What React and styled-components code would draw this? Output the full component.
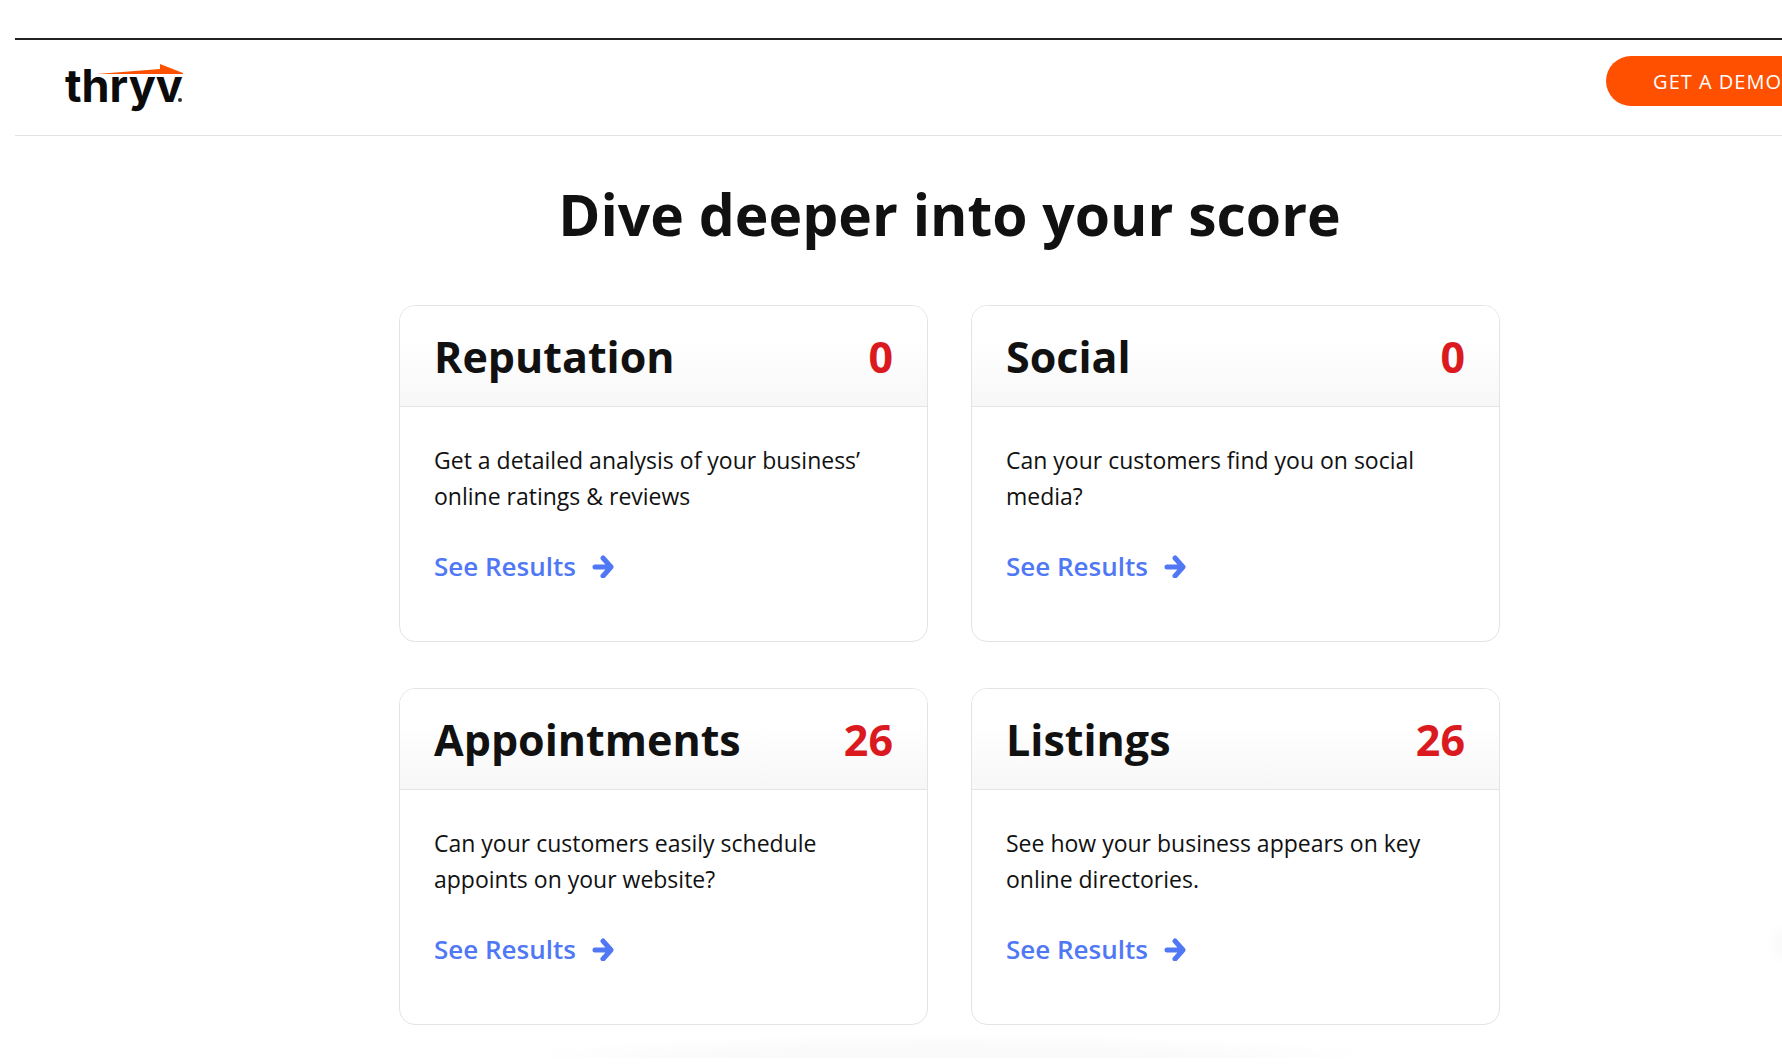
import React from "react";
import styled, { createGlobalStyle } from "styled-components";

const GlobalStyle = createGlobalStyle`
  * {
    box-sizing: border-box;
  }
  body {
    margin: 0;
    background: #fff;
    color: #111;
    font-family: "Open Sans", "Noto Sans", sans-serif;
    overflow: hidden;
  }
`;

/* the page is wider than its window, its right edge is cut off */
const Page = styled.div`
  padding: 38px 0 0 15px;
  margin-right: -102px;
`;

const Header = styled.header`
  display: flex;
  align-items: center;
  justify-content: space-between;
  height: 98px;
  padding: 0 48px;
  border-top: 2px solid #222;
  border-bottom: 1px solid #e2e2e2;
`;

const LogoLink = styled.a`
  display: block;
  height: 60px;
`;

const DemoButton = styled.button`
  height: 50px;
  margin-bottom: 13px;
  padding: 0 54px 0 47px;
  border: none;
  border-radius: 25px;
  background: #ff5000;
  color: #fff;
  font-family: inherit;
  font-size: 20px;
  letter-spacing: 1px;
  cursor: pointer;
`;

const Main = styled.main`
  max-width: 1101px;
  margin: 0 auto;
`;

const Title = styled.h1`
  margin: 38px 0 51px;
  font-size: 57px;
  line-height: 80px;
  font-weight: 700;
  text-align: center;
`;

const CardGrid = styled.div`
  display: grid;
  grid-template-columns: 1fr 1fr;
  gap: 46px 43px;
`;

const Card = styled.section`
  min-height: 337px;
  border: 1px solid #e4e4e4;
  border-radius: 16px;
  overflow: hidden;
`;

const CardHeader = styled.div`
  display: flex;
  align-items: center;
  justify-content: space-between;
  height: 101px;
  padding: 2px 34px 0;
  border-bottom: 1px solid #e4e4e4;
  background: linear-gradient(#fff 35%, #f7f7f7);
`;

const CardTitle = styled.h2`
  margin: 0;
  font-size: 43px;
  line-height: 60px;
  font-weight: 700;
`;

const Score = styled.span`
  color: #da1a1e;
  font-size: 43px;
  line-height: 60px;
  font-weight: 700;
`;

const CardBody = styled.div`
  padding: 35px 34px;
`;

const Description = styled.p`
  max-width: 440px;
  margin: 0 0 34px;
  font-size: 23px;
  line-height: 36px;
`;

const ResultsLink = styled.a`
  display: inline-flex;
  align-items: center;
  gap: 16px;
  color: #5078f5;
  font-size: 26px;
  line-height: 36px;
  font-weight: 600;
  text-decoration: none;
`;

const NextSectionShadow = styled.div`
  height: 24px;
  margin: 9px 110px 0;
  background: radial-gradient(
    ellipse 50% 100% at 50% 100%,
    #fafafa 50%,
    #fff 100%
  );
`;

const WidgetShadow = styled.div`
  position: fixed;
  right: -16px;
  bottom: 112px;
  width: 16px;
  height: 16px;
  border-radius: 8px;
  box-shadow: 0 0 18px 4px rgba(0, 0, 0, 0.05);
`;

const cards = [
  {
    title: "Reputation",
    score: 0,
    text: "Get a detailed analysis of your business’ online ratings & reviews",
  },
  {
    title: "Social",
    score: 0,
    text: "Can your customers find you on social media?",
  },
  {
    title: "Appointments",
    score: 26,
    text: "Can your customers easily schedule appoints on your website?",
  },
  {
    title: "Listings",
    score: 26,
    text: "See how your business appears on key online directories.",
  },
];

const Logo = () => (
  <svg width="122" height="60" viewBox="0 0 122 60" role="img" aria-label="thryv">
    <text
      x="2"
      y="44"
      fontFamily="Inter, sans-serif"
      fontSize="45"
      fontWeight="700"
      fill="#0b0b0b"
    >
      thryv
    </text>
    <path d="M34 16 L97 11 L97 6 L120 15 L120 16 Z" fill="#ff5000" />
    <circle cx="117" cy="42" r="2" fill="#333" />
  </svg>
);

const ArrowIcon = () => (
  <svg width="22" height="24" viewBox="0 0 22 24" aria-hidden="true">
    <path
      d="M3 13 H17 M11 4 L19 13 L11 22"
      fill="none"
      stroke="currentColor"
      strokeWidth="5"
      strokeLinecap="round"
      strokeLinejoin="round"
    />
  </svg>
);

const ScoreCard = ({ title, score, text }) => (
  <Card>
    <CardHeader>
      <CardTitle>{title}</CardTitle>
      <Score>{score}</Score>
    </CardHeader>
    <CardBody>
      <Description>{text}</Description>
      <ResultsLink href="#">
        See Results
        <ArrowIcon />
      </ResultsLink>
    </CardBody>
  </Card>
);

const App = () => {
  return (
    <>
      <GlobalStyle />
      <Page>
        <Header>
          <LogoLink href="#">
            <Logo />
          </LogoLink>
          <DemoButton type="button">GET A DEMO</DemoButton>
        </Header>
        <Main>
          <Title>Dive deeper into your score</Title>
          <CardGrid>
            {cards.map((card) => (
              <ScoreCard key={card.title} {...card} />
            ))}
          </CardGrid>
          <NextSectionShadow />
        </Main>
      </Page>
      <WidgetShadow />
    </>
  );
};

export default App;
